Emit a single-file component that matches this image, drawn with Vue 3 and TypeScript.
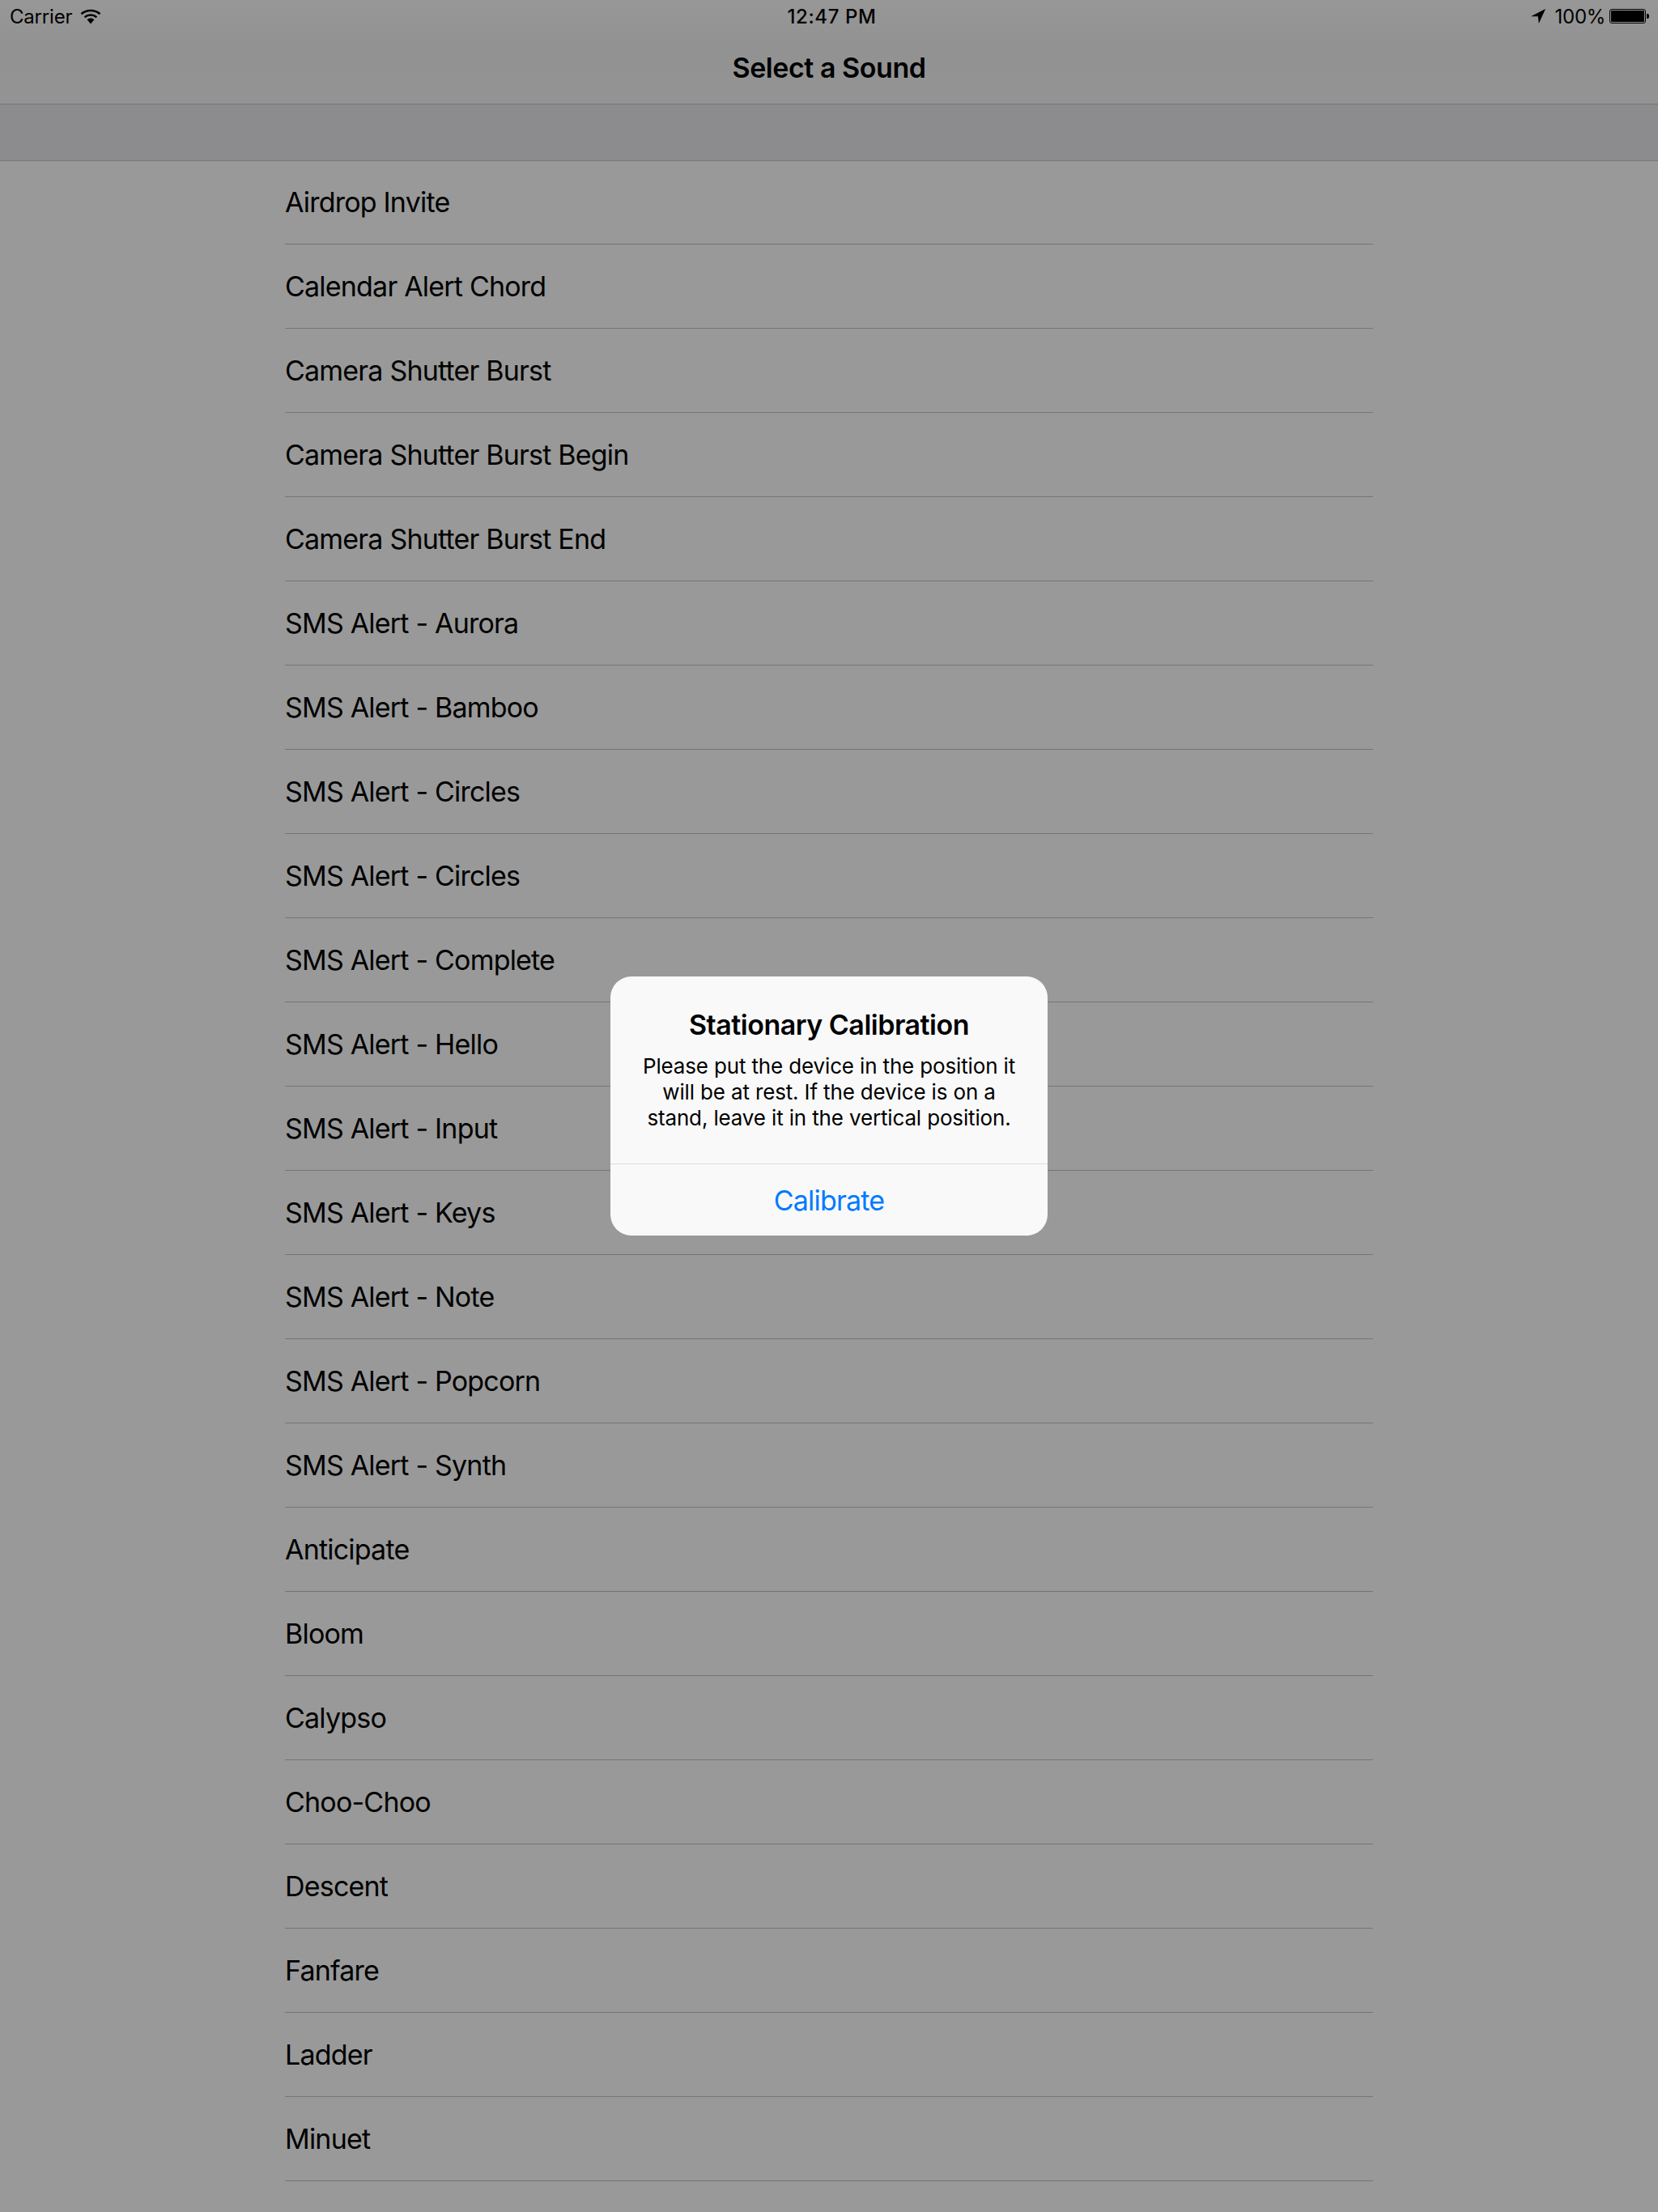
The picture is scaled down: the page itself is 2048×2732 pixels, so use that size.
<script setup lang="ts">
const sounds: string[] = [
  'Airdrop Invite',
  'Calendar Alert Chord',
  'Camera Shutter Burst',
  'Camera Shutter Burst Begin',
  'Camera Shutter Burst End',
  'SMS Alert - Aurora',
  'SMS Alert - Bamboo',
  'SMS Alert - Circles',
  'SMS Alert - Circles',
  'SMS Alert - Complete',
  'SMS Alert - Hello',
  'SMS Alert - Input',
  'SMS Alert - Keys',
  'SMS Alert - Note',
  'SMS Alert - Popcorn',
  'SMS Alert - Synth',
  'Anticipate',
  'Bloom',
  'Calypso',
  'Choo-Choo',
  'Descent',
  'Fanfare',
  'Ladder',
  'Minuet',
]
</script>

<template>
  <div class="screen">
    <header class="bar">
      <div class="status">
        <div class="status-side">
          <span class="carrier">Carrier</span>
          <svg class="wifi" width="26" height="19" viewBox="0 0 26 19" aria-hidden="true">
            <path d="M1.5 6.2C7.8 0.6 18.2 0.6 24.5 6.2" fill="none" stroke="#000" stroke-width="2.6" />
            <path d="M5.6 10.2C9.8 6.6 16.2 6.6 20.4 10.2" fill="none" stroke="#000" stroke-width="2.6" />
            <path d="M8.6 13.2C11.2 11 14.8 11 17.4 13.2L13 18.4Z" fill="#000" />
          </svg>
        </div>
        <span class="time">12:47 PM</span>
        <div class="status-side right">
          <svg class="arrow" width="18" height="18" viewBox="0 0 18 18" aria-hidden="true">
            <path d="M18 0L0 9.2H8.8L9.8 18Z" fill="#000" />
          </svg>
          <span class="battery-pct">100%</span>
          <div class="battery">
            <div class="battery-body"><div class="battery-fill"></div></div>
            <div class="battery-nub"></div>
          </div>
        </div>
      </div>
      <h1 class="nav-title">Select a Sound</h1>
    </header>
    <div class="section-head"></div>
    <ul class="list">
      <li v-for="(sound, i) in sounds" :key="i" class="row">
        <span class="row-label">{{ sound }}</span>
      </li>
    </ul>

    <div class="alert" role="alertdialog">
      <div class="alert-body">
        <h2 class="alert-title">Stationary Calibration</h2>
        <p class="alert-text">Please put the device in the position it will be at rest. If the device is on a stand, leave it in the vertical position.</p>
      </div>
      <button type="button" class="alert-btn">Calibrate</button>
    </div>
  </div>
</template>

<style>
html,
body {
  margin: 0;
  background: #999;
}
</style>

<style scoped>
.screen {
  position: relative;
  width: 2048px;
  height: 2732px;
  overflow: hidden;
  background: #999;
  color: #000;
  font-family: Inter, "Liberation Sans", sans-serif;
}
.bar {
  height: 128px;
  border-bottom: 1px solid #757575;
  background: linear-gradient(#979797, #929293 50%, #949494);
}
.status {
  height: 40px;
  padding: 0 11px 0 12px;
  display: grid;
  grid-template-columns: 1fr auto 1fr;
  align-items: center;
  font-size: 24px;
}
.status-side {
  display: flex;
  align-items: center;
}
.status-side.right {
  justify-content: flex-end;
}
.carrier {
  letter-spacing: -0.2px;
}
.wifi {
  margin-left: 10px;
}
.time {
  margin-left: 6px;
  font-weight: 500;
  letter-spacing: 0.6px;
}
.battery-pct {
  margin-left: 12px;
  letter-spacing: -0.3px;
}
.battery {
  display: flex;
  align-items: center;
  margin-left: 5px;
}
.battery-body {
  width: 45px;
  height: 18px;
  box-sizing: border-box;
  padding: 1px;
  border: 1px solid #000;
  border-radius: 3px;
}
.battery-fill {
  height: 100%;
  background: #000;
  border-radius: 1px;
}
.battery-nub {
  width: 3px;
  height: 6px;
  margin-left: 1px;
  background: #000;
  border-radius: 0 2px 2px 0;
}
.nav-title {
  margin: 0;
  height: 88px;
  line-height: 88px;
  text-align: center;
  font-size: 34px;
  font-weight: 600;
  letter-spacing: -0.45px;
}
.section-head {
  height: 70px;
  border-bottom: 1px solid #777;
  background: #8c8c8e;
  box-sizing: border-box;
}
.list {
  list-style: none;
  margin: 0;
  padding: 0 352px;
}
.row {
  height: 104px;
  box-sizing: border-box;
  padding-bottom: 1px;
  border-bottom: 1px solid #757575;
  display: flex;
  align-items: center;
  font-size: 34px;
  letter-spacing: -0.8px;
}
.row:first-child {
  height: 103px;
}
.alert {
  position: absolute;
  left: 754px;
  top: 1206px;
  width: 540px;
  height: 320px;
  border-radius: 26px;
  background: #f9f9f9;
  display: flex;
  flex-direction: column;
  text-align: center;
}
.alert-body {
  height: 232px;
  box-sizing: border-box;
  padding: 39px 32px 0;
  border-bottom: 1px solid #dcdcdc;
}
.alert-title {
  margin: 0;
  font-size: 34px;
  line-height: 42px;
  font-weight: 600;
  letter-spacing: -0.5px;
}
.alert-text {
  margin: 14px 0 0;
  font-size: 26px;
  line-height: 32px;
  letter-spacing: -0.15px;
}
.alert-btn {
  flex: 1;
  border: none;
  background: none;
  padding: 0;
  font: inherit;
  font-size: 34px;
  letter-spacing: -0.8px;
  color: #007aff;
  cursor: pointer;
}
</style>
